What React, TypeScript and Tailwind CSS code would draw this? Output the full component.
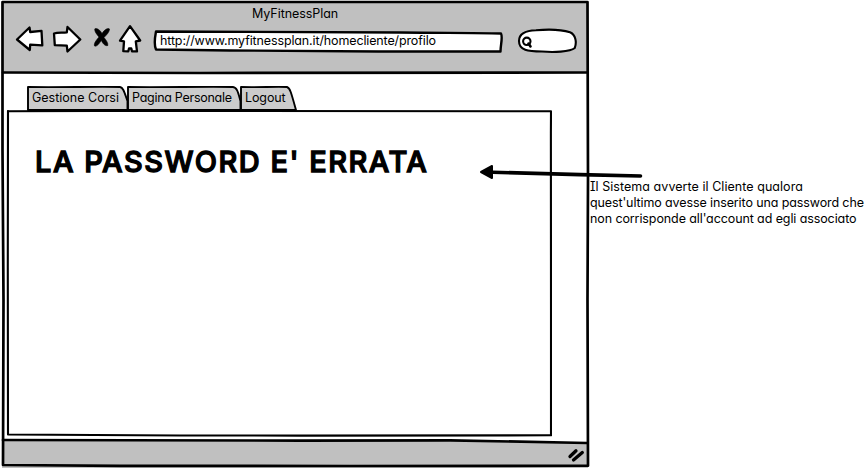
import type { ReactNode } from "react";

const ink = {
  fill: "none",
  stroke: "#000",
  strokeLinejoin: "round",
  strokeLinecap: "round",
} as const;

function NavIcons() {
  return (
    <svg className="mt-[20px] ml-[12px] h-[34px] w-[130px] shrink-0" viewBox="14 20 130 34" {...ink} strokeWidth={2.3}>
      <path fill="#fff" d="M17 37.5 L29.5 25.5 L30.2 30 L41.5 28.8 L42.3 43.3 L30.2 42.7 L29.8 48 Z" />
      <path fill="#fff" d="M54 31.5 C58 30 62 31 66.8 30.3 L67.5 25 L80.3 37.5 L67.5 49.5 L66.8 43.6 L54.8 43.2 Z" />
      <path fill="#000" strokeWidth={0.6} d="M95 27 C97 25.5 100 28 102 31.5 C104 28.5 107 25.5 109.5 27 C109.5 30 106.5 33 104 35.5 C106 38 108.3 41 107.8 43.5 C105 44.5 102.5 41 101.3 38.5 C99.5 41 97 45 94.5 44 C93.5 41 97 37.5 99 35 C96.5 32 94 29 95 27 Z" />
      <path fill="#fff" d="M130 24.2 L140.2 38.5 L135.8 39.3 L137 49.3 L132 49.3 L131.3 46.5 L129 46.5 L128.3 49.3 L123.3 49.2 L124 39.3 L120 38.6 Z" />
    </svg>
  );
}

function Tab({ className, outline, viewBox, children }: { className: string; outline: string; viewBox: string; children: ReactNode }) {
  return (
    <div className={`relative h-[25px] shrink-0 ${className}`}>
      <svg className="absolute inset-0 h-full w-full overflow-visible" viewBox={viewBox} {...ink} strokeWidth={1.9}>
        <path fill="#ccc" d={outline} />
      </svg>
      <span className="relative block pt-[4px] pl-[5px] leading-[16px] whitespace-nowrap">{children}</span>
    </div>
  );
}

export default function App() {
  return (
    <div className="relative flex h-[468px] w-[865px] overflow-hidden bg-white font-['Inter','Liberation_Sans',sans-serif] text-[12.5px] text-black [font-feature-settings:'cv11','cv08']">
      <main className="relative flex h-[468px] w-[590px] shrink-0 flex-col pt-[2px] pr-[2px] pl-[2px]">
        <header className="h-[71px] shrink-0 bg-[#c0c0c0]">
          <h1 className="h-0 pl-[250px] leading-[24px] tracking-[-0.05px]">MyFitnessPlan</h1>
          <div className="flex">
            <NavIcons />
            <div className="relative mt-[28px] ml-[8px] h-[23px] w-[351px] shrink-0">
              <svg className="absolute inset-0 h-full w-full" viewBox="152 30 351 23" {...ink} strokeWidth={2.4}>
                <path fill="#fff" d="M156 31.5 C220 32 310 31.5 400 32.5 C450 33 475 32.8 501 33.5 C503 37 500.5 45 500.5 51.5 C420 52 300 51 230 50.5 L156 49.5 C153.5 44 155 37 156 31.5 Z" />
              </svg>
              <span className="relative block pl-[8px] leading-[22px] tracking-[-0.13px] whitespace-nowrap">http://www.myfitnessplan.it/homecliente/profilo</span>
            </div>
            <svg className="mt-[26px] ml-[13px] h-[26px] w-[62px] shrink-0" viewBox="516 28 62 26" {...ink} strokeWidth={2.1}>
              <path fill="#fff" d="M519 41 C519 34 525 30.5 536 30.2 C550 29 563 30 570 32.3 C575.5 34.5 577 42 574.8 48 C570 52 553 52.5 542 51.5 C528 51.3 519 50.5 519 41 Z" />
              <circle cx="526.8" cy="41.3" r="3.7" />
              <path d="M528.5 43.5 L530.5 46.5" strokeWidth={2.6} />
            </svg>
          </div>
        </header>

        <nav className="mt-[13px] ml-[25px] flex">
          <Tab className="w-[100px]" viewBox="27 86 100 25" outline="M28 110 L28 87 C60 87.5 95 86.5 120 87 C123 87.5 124 91 127.5 101 L127.5 110 Z">Gestione Corsi</Tab>
          <Tab className="w-[113px] tracking-[-0.28px]" viewBox="127 86 113 25" outline="M128 110 L128 87 C160 87.5 205 86.5 233 87 C237 87.5 238 92 240.5 101 L240.5 110 Z">Pagina Personale</Tab>
          <Tab className="w-[57px] tracking-[-0.1px]" viewBox="240 86 57 25" outline="M241 110 L241 87 C258 87.5 275 86.5 287 87 C290 88 291 92 296 110 Z">Logout</Tab>
        </nav>

        <section className="relative -mt-[1px] ml-[4px] h-[328px] w-[546px] shrink-0">
          <svg className="absolute inset-0 h-full w-full" viewBox="6 110 546 328" {...ink} strokeWidth={2.1}>
            <path d="M8 111.2 L100 111 L551 111.2 C550.5 180 551.3 250 551 310 L551 435.3 L300 435.6 L180 435.5 L8 434.5 C8.5 350 7 200 8 111 Z" />
          </svg>
          <h2 className="relative pt-[34px] pl-[29px] text-[29px] leading-[36px] font-medium tracking-[1.5px] whitespace-nowrap [-webkit-text-stroke:1.3px_black]">LA PASSWORD E' ERRATA</h2>
        </section>

        <footer className="mt-auto flex h-[28px] justify-end bg-[#c0c0c0] [clip-path:polygon(0_0,60%_0,100%_3px,100%_100%,0_100%)]">
          <svg className="mt-[8px] mr-[3px] h-[17px] w-[18px]" viewBox="567 448 18 17" {...ink} strokeWidth={3.3}>
            <path d="M570 456.5 L576 450.8" />
            <path d="M573.5 460 L582.3 452.5" />
          </svg>
        </footer>

        <svg className="pointer-events-none absolute inset-0 h-[468px] w-[590px]" viewBox="0 0 590 468" {...ink} strokeWidth={2.7}>
          <path d="M2.5 2 L587.5 2 L588 180 L587.5 300 L588 465.7 L350 466 L120 465.8 L3 465 L3.5 300 L2.5 150 Z" />
          <path d="M3 72.5 L200 73 L587 72.5" />
          <path d="M3 440 L300 440.6 L450 440.3 L587 443" />
        </svg>
      </main>

      <aside className="h-[48px] pt-[179px] leading-[16px] whitespace-nowrap">
        <p className="tracking-[0.05px]">Il Sistema avverte il Cliente qualora</p>
        <p className="tracking-[-0.11px]">quest'ultimo avesse inserito una password che</p>
        <p className="tracking-[-0.1px]">non corrisponde all'account ad egli associato</p>
      </aside>

      <svg className="pointer-events-none absolute top-[160px] left-[476px] h-[24px] w-[170px]" viewBox="476 160 170 24" {...ink}>
        <path d="M484 172 C520 173 590 175 640.5 176" strokeWidth={3.6} />
        <path fill="#000" d="M481 172 L492 166 L492 178 Z" strokeWidth={2} />
      </svg>
    </div>
  );
}
